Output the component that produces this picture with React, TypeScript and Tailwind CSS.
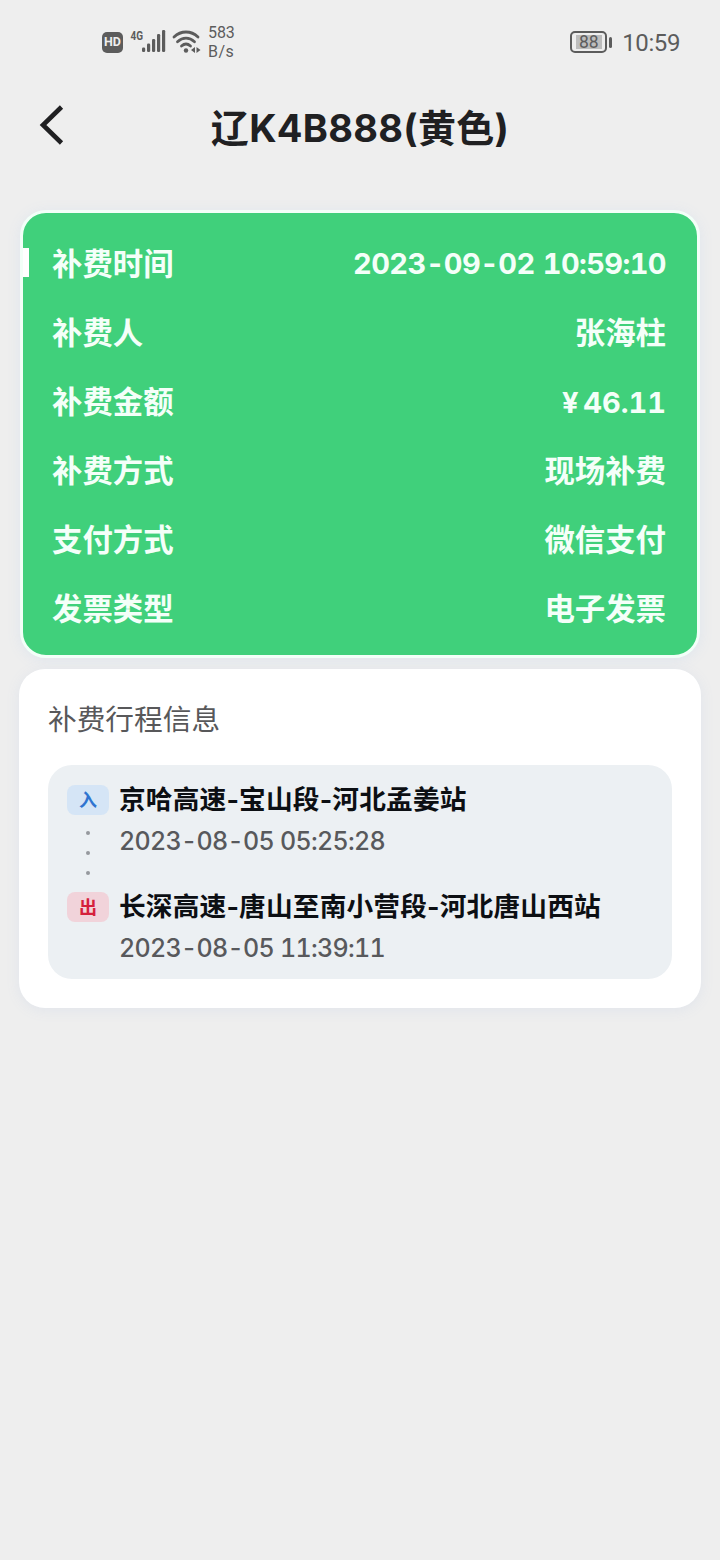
const ROWS = [
  { label: "补费时间", value: "2023-09-02 10:59:10", style: "text-[29px] leading-[35px] pb-[2px] tabular-nums tracking-[-0.6px] [word-spacing:1px]" },
  { label: "补费人",   value: "张海柱",              style: "text-[30.4px]" },
  { label: "补费金额", value: "¥ 46.11",             style: "text-[29px] tabular-nums [word-spacing:-3px]" },
  { label: "补费方式", value: "现场补费",            style: "text-[30.4px]" },
  { label: "支付方式", value: "微信支付",            style: "text-[30.4px]" },
  { label: "发票类型", value: "电子发票",            style: "text-[30.4px]" },
];

const STOPS = [
  { tag: "入", station: "京哈高速-宝山段-河北孟姜站",           time: "2023-08-05 05:25:28", color: "bg-[#d5e5f6] text-[#2f74d0]" },
  { tag: "出", station: "长深高速-唐山至南小营段-河北唐山西站", time: "2023-08-05 11:39:11", color: "bg-[#f1d3da] text-[#d5213c]" },
];

function StatusBar() {
  return (
    <div className="flex h-[84px] items-center pl-[102px] pr-10 text-[#5c5c5c]">
      <div className="flex h-[21px] w-[21px] items-center justify-center rounded-[5px] bg-[#5c5c5c] font-['Roboto',sans-serif] text-[12.5px] font-bold text-[#eeeeee]">
        HD
      </div>
      <svg className="ml-[7px]" width="38" height="28" viewBox="0 0 38 28" fill="#5c5c5c">
        <text x="0.5" y="11.5" fontSize="13.5" fontWeight="700" fontFamily="Roboto, sans-serif" textLength="12.5" lengthAdjust="spacingAndGlyphs">4G</text>
        <rect x="12" y="19.5" width="3.2" height="4.5" rx="1.3" />
        <rect x="17" y="15.5" width="3.2" height="8.5" rx="1.3" />
        <rect x="22" y="11" width="3.2" height="13" rx="1.3" />
        <rect x="27" y="6" width="3.2" height="18" rx="1.3" />
        <rect x="32" y="2" width="3.2" height="22" rx="1.3" />
      </svg>
      <svg className="ml-1" width="29" height="26" viewBox="0 0 29 26" fill="none" stroke="#5c5c5c" strokeWidth="2.8" strokeLinecap="round">
        <path d="M2 8C9 1.3 19 1.3 26 8" />
        <path d="M5.5 12.7c5.2-4.8 11.8-4.8 17 0" />
        <path d="M9.5 17c2.8-2.4 6.2-2.4 9 0" />
        <circle cx="14" cy="21.5" r="2.2" fill="#5c5c5c" stroke="none" />
        <path d="M23 18v6l-4-3zM24.5 18v6l4-3z" fill="#5c5c5c" stroke="none" />
      </svg>
      <div className="ml-[7px] font-['Roboto',sans-serif] text-[16px] leading-[19px] tracking-[-0.1px]">
        <p>583</p>
        <p className="tracking-[0.5px]">B/s</p>
      </div>
      <div className="ml-auto flex items-center">
        <div className="flex h-[22px] w-[37px] items-center justify-center rounded-[5px] border-2 border-[#5c5c5c]">
          <span className="flex h-[14px] w-[26px] items-center justify-center bg-[#bdbdbd] font-['Roboto',sans-serif] text-[17.5px]">88</span>
        </div>
        <div className="ml-[2px] h-[11px] w-[3px] rounded-sm bg-[#5c5c5c]" />
        <span className="ml-[10px] mt-[2px] font-['Roboto',sans-serif] text-[24px] tracking-[-0.4px]">10:59</span>
      </div>
    </div>
  );
}

export default function App() {
  return (
    <div className="min-h-[1560px] w-[720px] bg-[#eeeeee] font-['Inter','Noto_Sans_CJK_SC',sans-serif]">
      <StatusBar />

      <header className="grid h-[88px] grid-cols-[64px_1fr_64px] items-center">
        <svg className="ml-[38px] -mt-[6px]" width="28" height="42" viewBox="0 0 28 42" fill="none" stroke="#202022" strokeWidth="4.6">
          <path d="M23.5 3 5 21l18.5 18" />
        </svg>
        <h1 className="whitespace-nowrap pb-px text-center text-[38px] font-bold leading-[60px] tracking-[0.3px] text-[#202022]">辽K4B888(黄色)</h1>
      </header>

      <main className="px-[19px] pt-[38px]">
        {/* Payment details */}
        <section className="mx-px flex h-[448px] rounded-[26px] border-[3px] border-[#f2fff8] bg-[#40d07b] pt-[17px] shadow-[0_2px_14px_#dfe5ed]">
          <div className="mt-[18px] h-[29px] w-[6px] bg-white" />
          <dl className="flex-1 pl-[23px] pr-[31px] font-bold text-[#f4fff9]">
            {ROWS.map(row => (
              <div key={row.label} className="flex h-[69px] items-center justify-between">
                <dt className="text-[30.4px]">{row.label}</dt>
                <dd className={row.style}>{row.value}</dd>
              </div>
            ))}
          </dl>
        </section>

        {/* Trip */}
        <section className="mt-[11px] h-[339px] rounded-[26px] bg-white px-[29px] pt-7 shadow-[0_2px_14px_#e0e4eb]">
          <h2 className="h-[68px] text-[28.7px] leading-[45px] text-[#58585a]">补费行程信息</h2>
          <div className="flex h-[214px] flex-col rounded-[24px] bg-[#ecf0f3] pl-[19px] pt-[14px]">
            {STOPS.map((stop, i) => (
              <div key={stop.tag} className="flex h-[107px] shrink-0 gap-[10px]">
                <div className="flex w-[42px] flex-col items-center pt-[6px]">
                  <span className={`flex h-[30px] w-[42px] items-center justify-center rounded-[8px] text-[18px] font-bold ${stop.color}`}>{stop.tag}</span>
                  {i === 0 && (
                    <div className="mt-4 flex flex-col gap-4">
                      <i className="h-1 w-1 rounded-full bg-[#96999e]" />
                      <i className="h-1 w-1 rounded-full bg-[#96999e]" />
                      <i className="h-1 w-1 rounded-full bg-[#96999e]" />
                    </div>
                  )}
                </div>
                <div className="whitespace-nowrap">
                  <p className="text-[26.7px] font-bold leading-[41px] tracking-[0.17px] text-[#0c0f13]">{stop.station}</p>
                  <p className="text-[25px] font-medium leading-[43px] tabular-nums tracking-[-0.7px] text-[#58595c]">{stop.time}</p>
                </div>
              </div>
            ))}
          </div>
        </section>
      </main>
    </div>
  );
}
